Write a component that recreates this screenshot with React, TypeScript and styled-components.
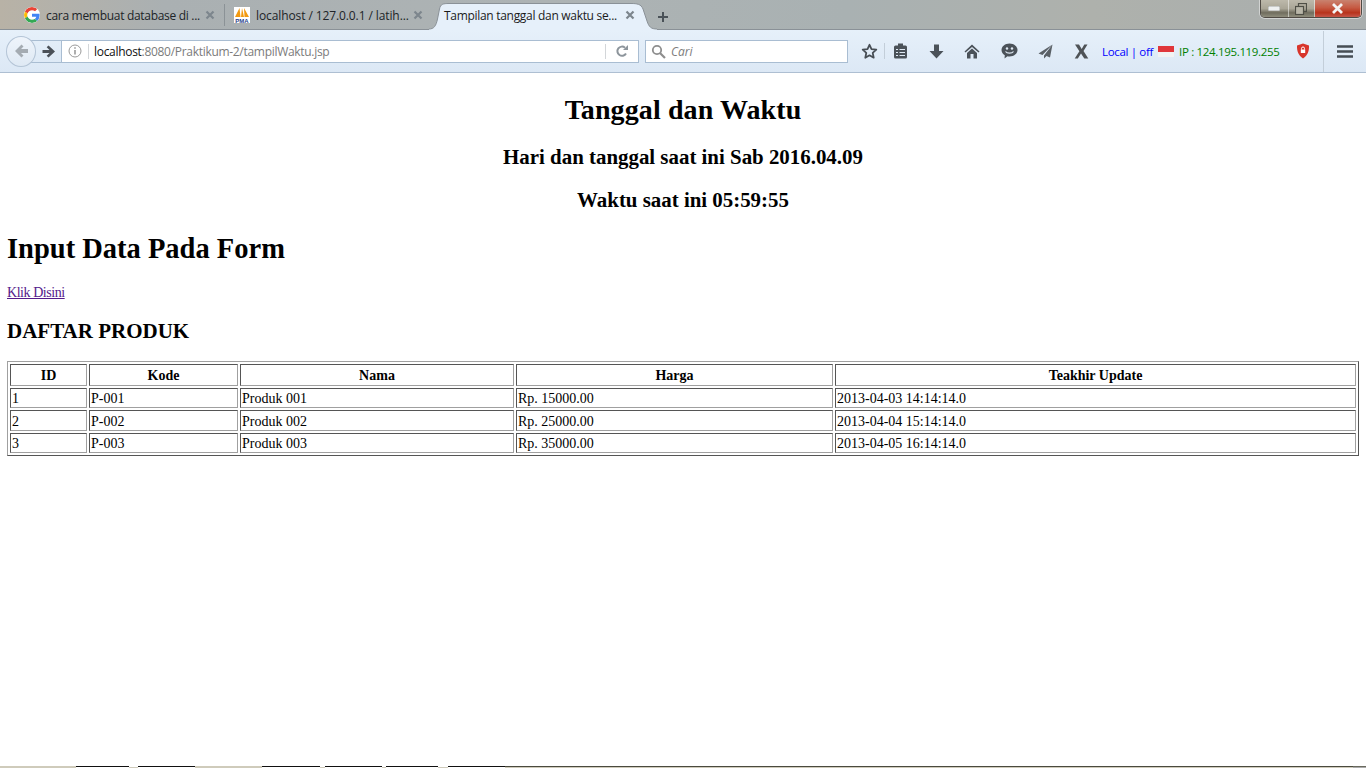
import React from "react";
import styled, { createGlobalStyle } from "styled-components";

const GlobalStyle = createGlobalStyle`
  html, body { margin: 0; padding: 0; background: #fff; overflow: hidden; }
`;

const Page = styled.div`
  width: 1366px;
  height: 768px;
  display: flex;
  flex-direction: column;
  overflow: hidden;
`;

/* ---------- browser chrome ---------- */
const TabStrip = styled.div`
  height: 30px;
  box-sizing: border-box;
  display: flex;
  align-items: flex-end;
  padding-left: 12px;
  background: linear-gradient(90deg, #b8b2a6 0%, #aab0b2 12%, #adb3b4 40%, #a9b1b2 62%, #aeb1ac 80%, #a9aeae 100%);
  border-bottom: 1px solid #8a9197;
  font-family: "Open Sans", "Noto Sans", sans-serif;
  font-size: 12px;
  position: relative;
`;

const Tab = styled.div<{ $width: number; $pad: number }>`
  width: ${(p) => p.$width}px;
  height: 28px;
  box-sizing: border-box;
  display: flex;
  align-items: center;
  padding: 0 9px 0 ${(p) => p.$pad}px;
  color: #202428;
  white-space: nowrap;
`;

const ActiveTab = styled.div`
  width: 218px;
  height: 28px;
  box-sizing: border-box;
  display: flex;
  align-items: center;
  padding: 0 15px 0 12px;
  color: #1b1b1b;
  white-space: nowrap;
  position: relative;
`;

const TabShape = styled.svg`
  position: absolute;
  left: -3px;
  top: 0;
`;

const TabTitle = styled.span<{ $spacing: number; $left?: number }>`
  flex: 1;
  margin-left: ${(p) => p.$left ?? 6}px;
  letter-spacing: ${(p) => p.$spacing}px;
  position: relative;
`;

const TabClose = styled.span`
  display: flex;
  position: relative;
`;

const TabSeparator = styled.div`
  width: 1px;
  height: 22px;
  margin-bottom: 3px;
  background: #8b9296;
`;

const NewTab = styled.div`
  margin: 0 0 6px 7px;
  display: flex;
`;

const WindowControls = styled.div`
  position: absolute;
  top: 0;
  right: 4px;
  height: 18px;
  width: 102px;
  display: flex;
  box-sizing: border-box;
  border: 1px solid #4f4a44;
  border-top: none;
  border-radius: 0 0 5px 5px;
  overflow: hidden;
  box-shadow: 0 0 0 1px rgba(255, 255, 255, 0.45);
`;

const WindowButton = styled.div<{ $width: number; $close?: boolean }>`
  width: ${(p) => p.$width}px;
  display: flex;
  align-items: center;
  justify-content: center;
  border-right: 1px solid rgba(255, 255, 255, 0.5);
  background: ${(p) =>
    p.$close
      ? "linear-gradient(180deg, #c9826f 0%, #c65a43 45%, #b8331c 75%, #c4574a 100%)"
      : "linear-gradient(180deg, #bdb9ab 0%, #aaa697 50%, #706d5e 75%, #8f8d7c 100%)"};
`;

const NavBar = styled.div`
  height: 43px;
  box-sizing: border-box;
  display: flex;
  align-items: center;
  position: relative;
  background: linear-gradient(180deg, #e6f0fa 0%, #dce8f5 100%);
  border-bottom: 1px solid #aebfd2;
  font-family: "Open Sans", "Noto Sans", sans-serif;
  font-size: 12px;
`;

const BackCircle = styled.div`
  width: 30px;
  height: 31px;
  margin-left: 6px;
  box-sizing: border-box;
  border: 1px solid #b4c4d6;
  border-radius: 50%;
  background: linear-gradient(180deg, #eef4fb, #dfe9f4);
  display: flex;
  align-items: center;
  justify-content: center;
  flex-shrink: 0;
  position: relative;
  z-index: 1;
`;

const ForwardSlot = styled.div`
  width: 31px;
  height: 23px;
  margin-left: -6px;
  box-sizing: border-box;
  padding-left: 12px;
  border-top: 1px solid #a9bdd2;
  border-bottom: 1px solid #a9bdd2;
  display: flex;
  align-items: center;
  flex-shrink: 0;
`;

const Field = styled.div<{ $width: number; $left: number }>`
  width: ${(p) => p.$width}px;
  height: 23px;
  margin-left: ${(p) => p.$left}px;
  box-sizing: border-box;
  background: #fff;
  border: 1px solid #a9bdd2;
  display: flex;
  align-items: center;
  flex-shrink: 0;
`;

const InfoSlot = styled.div`
  width: 27px;
  height: 15px;
  box-sizing: border-box;
  padding-left: 6px;
  border-right: 1px solid #d3d6d9;
  display: flex;
  align-items: center;
`;

const UrlText = styled.span`
  flex: 1;
  margin-left: 5px;
  color: #7b7b7b;
  white-space: nowrap;
  letter-spacing: -0.3px;
  b {
    font-weight: 400;
    color: #111;
  }
`;

const ReloadSlot = styled.div`
  width: 32px;
  height: 15px;
  border-left: 1px solid #d3d6d9;
  display: flex;
  align-items: center;
  justify-content: center;
`;

const SearchIconSlot = styled.span`
  margin-left: 5px;
  display: flex;
`;

const SearchHint = styled.span`
  margin-left: 5px;
  font-style: italic;
  color: #7d7d7d;
`;

const ToolIcon = styled.div<{ $width: number; $pad?: number }>`
  width: ${(p) => p.$width}px;
  height: 24px;
  box-sizing: border-box;
  padding-left: ${(p) => p.$pad ?? 0}px;
  display: flex;
  align-items: center;
  justify-content: center;
  flex-shrink: 0;
`;

const ToolDivider = styled.div<{ $height?: number }>`
  width: 1px;
  height: ${(p) => p.$height ?? 16}px;
  background: #c3ced9;
  flex-shrink: 0;
`;

const Status = styled.span<{ $color: string; $left: number }>`
  color: ${(p) => p.$color};
  margin-left: ${(p) => p.$left}px;
  white-space: nowrap;
  font-size: 11.5px;
  letter-spacing: -0.33px;
`;

const Flag = styled.div`
  width: 16px;
  height: 11px;
  margin-left: 5px;
  flex-shrink: 0;
  background: linear-gradient(180deg, #e0363a 0 50%, #f2f2f2 50% 100%);
`;

/* ---------- page content ---------- */
const Content = styled.main`
  flex: 1;
  padding: 0 7px;
  background: #fff;
  color: #000;
  font-family: "Liberation Serif", "Times New Roman", serif;
  font-size: 14px;
  overflow: hidden;
`;

const Title = styled.h1`
  margin: 18px 0 0;
  font-size: 28px;
  line-height: 37px;
  font-weight: 700;
  letter-spacing: 0.1px;
  text-align: center;
`;

const SubTitle = styled.h2<{ $top: number }>`
  margin: ${(p) => p.$top}px 0 0;
  font-size: 20.9px;
  line-height: 24px;
  font-weight: 700;
  text-align: center;
`;

const SectionTitle = styled.h1`
  margin: 21px 0 0;
  font-size: 28.5px;
  line-height: 32px;
  font-weight: 700;
`;

const LinkLine = styled.p`
  margin: 20px 0 0;
  line-height: 16px;
  a {
    color: #551a8b;
    text-decoration: underline;
    letter-spacing: -0.45px;
  }
`;

const TableTitle = styled.h2`
  margin: 18px 0 0;
  font-size: 21px;
  line-height: 24px;
  font-weight: 700;
`;

const ProductTable = styled.table`
  width: 1352px;
  margin-top: 18px;
  border: 1px solid;
  border-color: #a0a0a0 #555 #555 #a0a0a0;
  border-spacing: 2px;
  border-collapse: separate;
  table-layout: fixed;

  th,
  td {
    border: 1px solid;
    border-color: #555 #a0a0a0 #a0a0a0 #555;
    font-size: 14px;
    line-height: 16px;
  }
  th {
    font-weight: 700;
    text-align: center;
    padding: 3px 1px 1px;
  }
  td {
    text-align: left;
    padding: 2px 1px 0;
  }
  tbody tr:nth-child(2) td {
    padding: 3px 1px 0;
  }
`;

const BottomEdge = styled.div`
  height: 2px;
  display: flex;
  flex-shrink: 0;
  background: #fff;
`;

const EdgePart = styled.div<{ $width: number; $top: string; $bottom: string }>`
  width: ${(p) => p.$width}px;
  height: 2px;
  box-sizing: border-box;
  border-top: 1px solid ${(p) => p.$top};
  background: ${(p) => p.$bottom};
`;

/* ---------- drawings ---------- */
const CloseX = () => (
  <svg width="10" height="10" viewBox="0 0 10 10">
    <path d="M1.5 1.5l7 7M8.5 1.5l-7 7" stroke="#7d868d" strokeWidth="2.2" />
  </svg>
);

const GoogleIcon = () => (
  <svg width="16" height="16" viewBox="0 0 48 48" style={{ background: "#fff", borderRadius: "50%", flexShrink: 0 }}>
    <path fill="#EA4335" d="M24 9.500c3.500 0 6.700 1.300 9.100 3.400l6.800-6.800C35.800 2.400 30.200 0 24 0 14.600 0 6.600 5.400 2.600 13.200l7.900 6.200C12.400 13.600 17.700 9.500 24 9.500z" />
    <path fill="#4285F4" d="M46.900 24.500c0-1.600-.1-3.100-.4-4.500H24v9h12.900c-.6 3-2.200 5.400-4.700 7.100l7.700 6c4.500-4.200 7-10.300 7-17.600z" />
    <path fill="#FBBC05" d="M10.500 28.600c-.5-1.400-.8-3-.8-4.600s.3-3.200.8-4.600l-7.900-6.200C.9 16.500 0 20.100 0 24s.9 7.500 2.600 10.800l7.900-6.200z" />
    <path fill="#34A853" d="M24 48c6.500 0 11.900-2.100 15.900-5.800l-7.700-6c-2.200 1.400-4.900 2.300-8.200 2.300-6.300 0-11.600-4.200-13.500-9.900l-7.900 6.200C6.600 42.600 14.600 48 24 48z" />
  </svg>
);

const PmaIcon = () => (
  <svg width="16" height="16" viewBox="0 0 16 16" style={{ flexShrink: 0 }}>
    <rect width="16" height="16" fill="#fff" />
    <path d="M1 10L5.500 1l1 9zM7 10l1-9 2 9zM10.500 10L10 1l5 9z" fill="#f29a12" />
    <text x="8" y="15.500" textAnchor="middle" fontFamily="Liberation Sans" fontSize="6" fontWeight="700" fill="#2b3f8c">
      PMA
    </text>
  </svg>
);

const ArrowLeft = () => (
  <svg width="15" height="14" viewBox="0 0 15 14">
    <path d="M7.500 0.500L1 7l6.500 6.500 2-2L7 9h7V5H7l2.500-2.500z" fill="#a4abb2" />
  </svg>
);

const ArrowRight = () => (
  <svg width="13" height="13" viewBox="0 0 13 13">
    <path d="M6.500 0.500L13 6.500 6.500 12.500l-1.800-1.800L7.500 8H0.500V5h7L4.700 2.300z" fill="#4b5158" />
  </svg>
);

const InfoIcon = () => (
  <svg width="14" height="14" viewBox="0 0 14 14">
    <circle cx="7" cy="7" r="6" fill="none" stroke="#9a9a9a" />
    <path d="M7 6v4.500M7 3.200v1.600" stroke="#8d8d8d" strokeWidth="1.400" />
  </svg>
);

const ReloadIcon = () => (
  <svg width="14" height="14" viewBox="0 0 14 14">
    <path d="M11 9.500A4.600 4.600 0 1 1 10 3.700" fill="none" stroke="#8d959c" strokeWidth="2" />
    <path d="M8 6h5V1z" fill="#8d959c" />
  </svg>
);

const SearchIcon = () => (
  <svg width="15" height="15" viewBox="0 0 15 15">
    <circle cx="6" cy="6" r="4.200" fill="none" stroke="#8e8e8e" strokeWidth="1.800" />
    <path d="M9 9l5 5" stroke="#8e8e8e" strokeWidth="2.200" />
  </svg>
);

const StarIcon = () => (
  <svg width="17" height="17" viewBox="0 0 17 17">
    <path d="M8.500 1.800l2 4.400 4.800.5-3.600 3.200 1 4.800-4.200-2.400-4.200 2.400 1-4.800L1.700 6.700l4.800-.5z" fill="none" stroke="#474e55" strokeWidth="1.800" strokeLinejoin="round" />
  </svg>
);

const ClipboardIcon = () => (
  <svg width="15" height="16" viewBox="0 0 15 16">
    <rect x="1" y="2.500" width="13" height="13" rx="1.500" fill="#4b5259" />
    <rect x="5" y="0.500" width="5" height="3" fill="#4b5259" />
    <path d="M3 6.500h2M6.500 6.500h5.500M3 9.500h2M6.500 9.500h5.500M3 12.500h2M6.500 12.500h5.500" stroke="#dfe9f4" />
  </svg>
);

const DownIcon = () => (
  <svg width="15" height="15" viewBox="0 0 15 15">
    <path d="M5 0.500h5V7h4.500l-7 7.500-7-7.500H5z" fill="#4b5259" />
  </svg>
);

const HomeIcon = () => (
  <svg width="16" height="15" viewBox="0 0 16 15">
    <path d="M8 0.500L0.500 7.500 1.500 8.500 8 3l6.500 5.500 1-1zM3 9l5-4.500L13 9v5.500H9.500V10h-3v4.500H3z" fill="#4b5259" />
  </svg>
);

const SmileIcon = () => (
  <svg width="17" height="16" viewBox="0 0 17 16">
    <path d="M8.500 0.500c4.400 0 8 2.900 8 6.500s-3.600 6.500-8 6.500c-.7 0-1.400-.1-2-.2L3.500 15.500l.3-3.300C1.800 11 .5 9.100.5 7c0-3.600 3.600-6.500 8-6.500z" fill="#4b5259" />
    <circle cx="6" cy="5.500" r="1.200" fill="#dfe9f4" />
    <circle cx="11" cy="5.500" r="1.200" fill="#dfe9f4" />
    <path d="M4.500 8.500c1.500 2.200 6.500 2.200 8 0" fill="none" stroke="#dfe9f4" strokeWidth="1.200" />
  </svg>
);

const SendIcon = () => (
  <svg width="15" height="15" viewBox="0 0 15 15">
    <path d="M14.500 0.500L0.500 9.500l4 1.500zM14.500 0.500L6 11.500v3l2.500-2.500 3.500 1.500z" fill="#5a6066" />
  </svg>
);

const BigX = () => (
  <svg width="15" height="15" viewBox="0 0 15 15">
    <path d="M1 0.500h4l2.700 4.400L10.300 0.500h3.200L9.500 7l4.800 7.500h-4L7 9.500 3.800 14.500H0.700L5.400 7.300z" fill="#4f5357" />
  </svg>
);

const ShieldIcon = () => (
  <svg width="14" height="16" viewBox="0 0 14 16">
    <path d="M7 0.500l6 2c.3 5.500-1.500 10-6 13-4.500-3-6.300-7.500-6-13z" fill="#d8352b" />
    <path d="M4.800 6.500h4.400v3.500H4.800z" fill="#fff" />
    <path d="M5.500 6.500V5.500a1.500 1.500 0 0 1 3 0v1" fill="none" stroke="#fff" />
  </svg>
);

const MenuIcon = () => (
  <svg width="16" height="13" viewBox="0 0 16 13">
    <path d="M0 1.500h16M0 6.500h16M0 11.500h16" stroke="#464d54" strokeWidth="2.400" />
  </svg>
);

const PRODUCTS = [
  { id: 1, kode: "P-001", nama: "Produk 001", harga: "Rp. 15000.00", update: "2013-04-03 14:14:14.0" },
  { id: 2, kode: "P-002", nama: "Produk 002", harga: "Rp. 25000.00", update: "2013-04-04 15:14:14.0" },
  { id: 3, kode: "P-003", nama: "Produk 003", harga: "Rp. 35000.00", update: "2013-04-05 16:14:14.0" },
];

const BEIGE = "#cfcbbb";
const DARK = "#111";
const EDGE: [number, string, string][] = [
  [76, BEIGE, BEIGE], [53, DARK, "#fff"], [9, "#fff", BEIGE], [57, DARK, "#fff"], [67, BEIGE, BEIGE], [58, DARK, "#fff"], [5, "#fff", BEIGE],
  [57, DARK, "#fff"], [4, "#fff", BEIGE], [52, DARK, "#fff"], [10, "#fff", BEIGE], [57, DARK, "#fff"], [848, "#4a4a3e", BEIGE], [13, "#6a6a5e", "#aaa"],
];

const App = () => (
  <Page>
    <GlobalStyle />
    <TabStrip>
      <Tab $width={212} $pad={12}>
        <GoogleIcon />
        <TabTitle $spacing={-0.3}>cara membuat database di ...</TabTitle>
        <CloseX />
      </Tab>
      <TabSeparator />
      <Tab $width={207} $pad={9}>
        <PmaIcon />
        <TabTitle $spacing={-0.1}>localhost / 127.0.0.1 / latih...</TabTitle>
        <CloseX />
      </Tab>
      <ActiveTab>
        <TabShape width="228" height="29" viewBox="0 0 228 29">
          <path d="M0 28C5 28 7 25 8.500 18L10.500 8C11.500 3 14 2.500 20 2.500H202C208 2.500 212 3 214 8L218 20C220 26 222 28 228 28V29H0Z" fill="#e6f0fa" />
          <path d="M0 28C5 28 7 25 8.500 18L10.500 8C11.500 3 14 2.500 20 2.500H202C208 2.500 212 3 214 8L218 20C220 26 222 28 228 28" fill="none" stroke="#8a9197" />
        </TabShape>
        <TabTitle $spacing={-0.3} $left={0}>Tampilan tanggal dan waktu se...</TabTitle>
        <TabClose>
          <CloseX />
        </TabClose>
      </ActiveTab>
      <NewTab>
        <svg width="12" height="12" viewBox="0 0 12 12">
          <path d="M6 1v10M1 6h10" stroke="#4a5258" strokeWidth="2" />
        </svg>
      </NewTab>
      <WindowControls>
        <WindowButton $width={28}>
          <svg width="12" height="5" viewBox="0 0 12 5">
            <rect width="12" height="5" fill="#eef0f0" stroke="#5a5a50" strokeWidth="0.500" />
          </svg>
        </WindowButton>
        <WindowButton $width={27}>
          <svg width="12" height="12" viewBox="0 0 12 12">
            <rect x="3.500" y="0.500" width="8" height="8" fill="none" stroke="#4f4f46" strokeWidth="1.200" />
            <rect x="0.500" y="3.500" width="8" height="8" fill="#b9b6a8" stroke="#4f4f46" strokeWidth="1.200" />
          </svg>
        </WindowButton>
        <WindowButton $width={47} $close>
          <svg width="13" height="11" viewBox="0 0 13 11">
            <path d="M2 1l9 9M11 1l-9 9" stroke="#f4f4f4" strokeWidth="2.800" />
          </svg>
        </WindowButton>
      </WindowControls>
    </TabStrip>

    <NavBar>
      <BackCircle>
        <ArrowLeft />
      </BackCircle>
      <ForwardSlot>
        <ArrowRight />
      </ForwardSlot>
      <Field $width={578} $left={0}>
        <InfoSlot>
          <InfoIcon />
        </InfoSlot>
        <UrlText>
          <b>localhost</b>:8080/Praktikum-2/tampilWaktu.jsp
        </UrlText>
        <ReloadSlot>
          <ReloadIcon />
        </ReloadSlot>
      </Field>
      <Field $width={203} $left={6}>
        <SearchIconSlot>
          <SearchIcon />
        </SearchIconSlot>
        <SearchHint>Cari</SearchHint>
      </Field>
      <ToolIcon $width={36} $pad={6}>
        <StarIcon />
      </ToolIcon>
      <ToolDivider />
      <ToolIcon $width={30}>
        <ClipboardIcon />
      </ToolIcon>
      <ToolIcon $width={42}>
        <DownIcon />
      </ToolIcon>
      <ToolIcon $width={30}>
        <HomeIcon />
      </ToolIcon>
      <ToolIcon $width={44}>
        <SmileIcon />
      </ToolIcon>
      <ToolIcon $width={28}>
        <SendIcon />
      </ToolIcon>
      <ToolIcon $width={45}>
        <BigX />
      </ToolIcon>
      <Status $color="#0000ff" $left={-2}>Local | off</Status>
      <Flag />
      <Status $color="#008000" $left={5}>IP : 124.195.119.255</Status>
      <ToolIcon $width={43} $pad={4}>
        <ShieldIcon />
      </ToolIcon>
      <ToolDivider $height={41} />
      <ToolIcon $width={43}>
        <MenuIcon />
      </ToolIcon>
    </NavBar>

    <Content>
      <Title>Tanggal dan Waktu</Title>
      <SubTitle $top={17}>Hari dan tanggal saat ini Sab 2016.04.09</SubTitle>
      <SubTitle $top={19}>Waktu saat ini 05:59:55</SubTitle>
      <SectionTitle>Input Data Pada Form</SectionTitle>
      <LinkLine>
        <a href="#form">Klik Disini</a>
      </LinkLine>
      <TableTitle>DAFTAR PRODUK</TableTitle>
      <ProductTable>
        <colgroup>
          <col style={{ width: 77 }} />
          <col style={{ width: 149 }} />
          <col style={{ width: 274 }} />
          <col style={{ width: 317 }} />
          <col />
        </colgroup>
        <thead>
          <tr>
            <th>ID</th>
            <th>Kode</th>
            <th>Nama</th>
            <th>Harga</th>
            <th>Teakhir Update</th>
          </tr>
        </thead>
        <tbody>
          {PRODUCTS.map((p) => (
            <tr key={p.id}>
              <td>{p.id}</td>
              <td>{p.kode}</td>
              <td>{p.nama}</td>
              <td>{p.harga}</td>
              <td>{p.update}</td>
            </tr>
          ))}
        </tbody>
      </ProductTable>
    </Content>

    <BottomEdge>
      {EDGE.map(([w, top, bottom], i) => (
        <EdgePart key={i} $width={w} $top={top} $bottom={bottom} />
      ))}
    </BottomEdge>
  </Page>
);

export default App;
